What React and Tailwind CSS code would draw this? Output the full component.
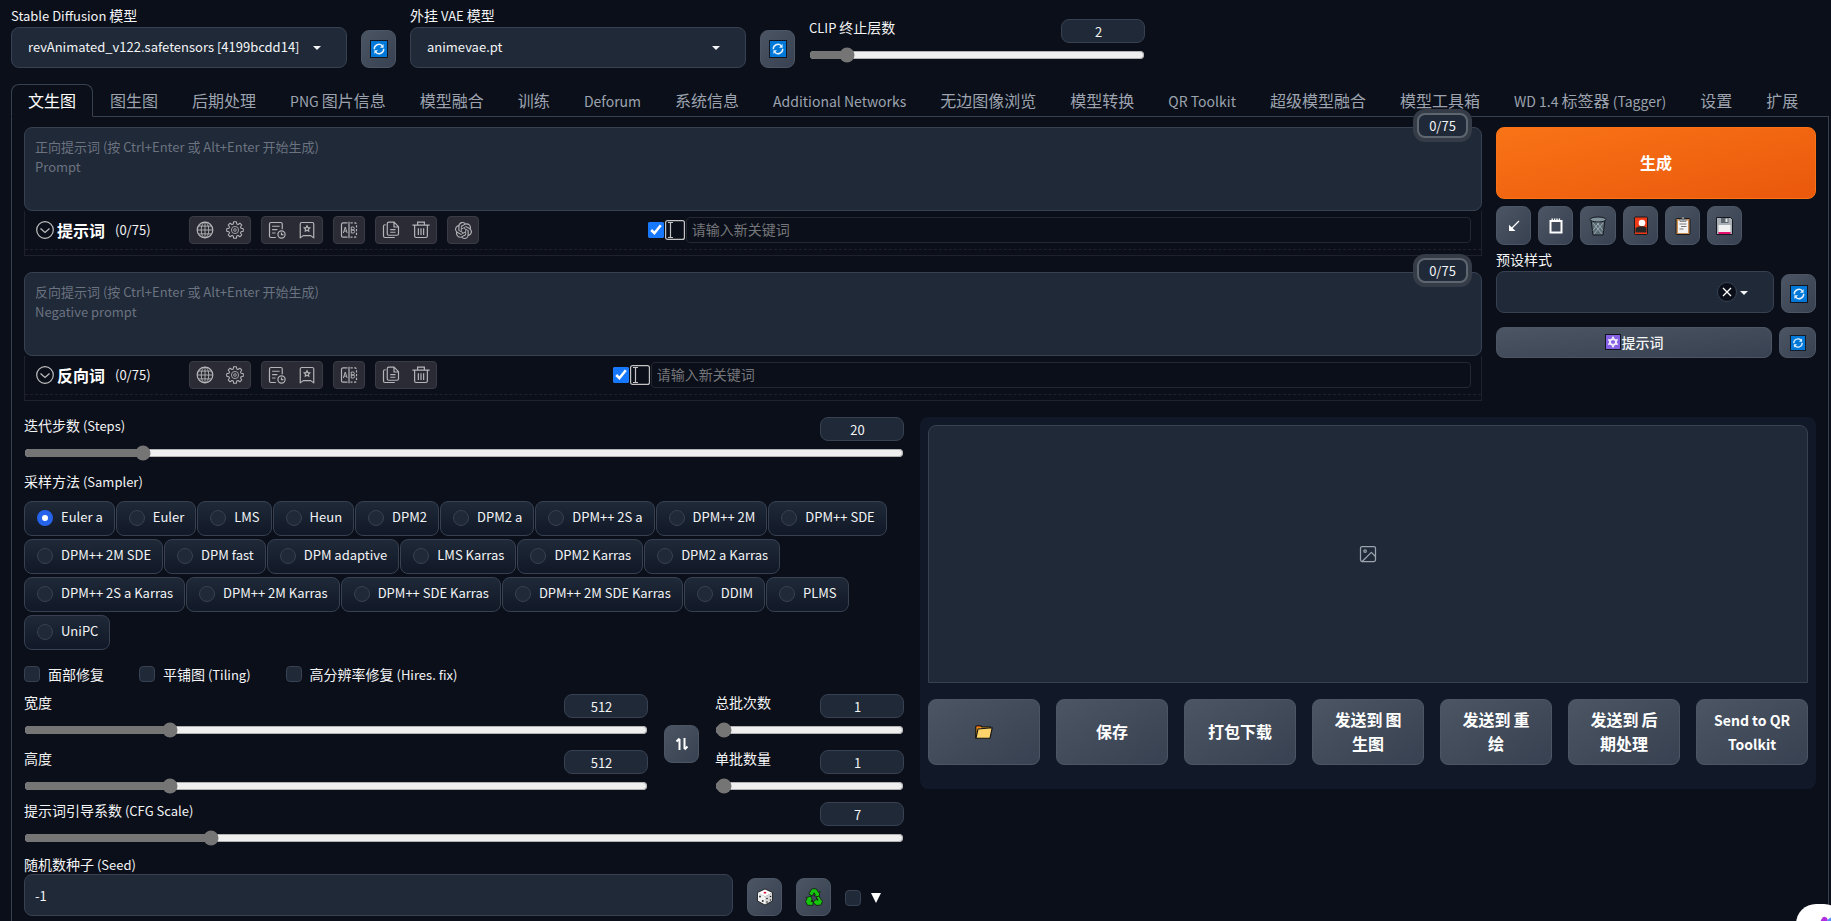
import React, { useState } from 'react'
import { SiOpenai } from 'react-icons/si'

const TABS = [
  '文生图', '图生图', '后期处理', 'PNG 图片信息', '模型融合', '训练', 'Deforum', '系统信息',
  'Additional Networks', '无边图像浏览', '模型转换', 'QR Toolkit', '超级模型融合', '模型工具箱',
  'WD 1.4 标签器 (Tagger)', '设置', '扩展'
]

const SAMPLERS = [
  'Euler a', 'Euler', 'LMS', 'Heun', 'DPM2', 'DPM2 a', 'DPM++ 2S a', 'DPM++ 2M', 'DPM++ SDE',
  'DPM++ 2M SDE', 'DPM fast', 'DPM adaptive', 'LMS Karras', 'DPM2 Karras', 'DPM2 a Karras',
  'DPM++ 2S a Karras', 'DPM++ 2M Karras', 'DPM++ SDE Karras', 'DPM++ 2M SDE Karras', 'DDIM', 'PLMS', 'UniPC'
]

const OUTPUT_ACTIONS = ['保存', '打包下载', '发送到 图生图', '发送到 重绘', '发送到 后期处理', 'Send to QR Toolkit']

// outline of a cog with eight teeth in a 24x24 box
const GEAR = Array.from({ length: 8 }, (_, k) =>
  [[-16, 8.4], [-9, 11.2], [9, 11.2], [16, 8.4]].map(([deg, r]) => {
    const a = ((k * 45 + deg) * Math.PI) / 180
    return `${(12 + r * Math.cos(a)).toFixed(2)} ${(12 + r * Math.sin(a)).toFixed(2)}`
  }).join('L')
).join('L')

/* ---------- text ---------- */

// Latin letters of the CJK face run large, so they are set one step smaller
function Mixed({ text, latin = 'text-[13px] leading-none' }) {
  return text.split(/([\x20-\x7e]+)/).filter(Boolean).map((part, i) =>
    /^[\x20-\x7e]/.test(part) ? <span key={i} className={latin}>{part}</span> : part
  )
}

/* ---------- icons ---------- */

function LineIcon({ children }) {
  return (
    <svg viewBox="0 0 24 24" className="w-[18px] h-[18px]" fill="none" stroke="currentColor" strokeWidth="1.6">
      {children}
    </svg>
  )
}

const GlobeIcon = () => (
  <LineIcon>
    <circle cx="12" cy="12" r="10.4" />
    <ellipse cx="12" cy="12" rx="5" ry="10.4" strokeWidth="1.2" />
    <path d="M12 1.6v20.8M1.6 12h20.8M3.2 6.8h17.6M3.2 17.2h17.6" strokeWidth="1.2" />
  </LineIcon>
)

const GearIcon = () => (
  <LineIcon>
    <path d={`M${GEAR}Z`} strokeWidth="1.4" strokeLinejoin="round" />
    <circle cx="12" cy="12" r="4.8" strokeWidth="1.1" />
    <circle cx="12" cy="12" r="1.8" strokeWidth="1.1" />
  </LineIcon>
)

const HistoryIcon = () => (
  <LineIcon>
    <path d="M10.5 22H4a2 2 0 0 1-2-2V4a2 2 0 0 1 2-2h13a2 2 0 0 1 2 2v7M5.5 7h10M5.5 11.5h7M5.5 16H10" />
    <circle cx="18" cy="18" r="4.8" />
    <path d="M18 15.2V18.2h2.6" />
  </LineIcon>
)

const FavoriteIcon = () => (
  <LineIcon>
    <path d="M3 22.500V4a2 2 0 0 1 2-2h14a2 2 0 0 1 2 2v18.500L17 19.500H7Z" strokeLinejoin="round" />
    <path d="m12 6.500 1.200 2.300 2.500.4-1.800 1.800.4 2.500-2.300-1.100-2.300 1.100.4-2.500-1.800-1.800 2.500-.4Z" />
  </LineIcon>
)

const TranslateIcon = () => (
  <LineIcon>
    <path d="M10 2.500H4a2 2 0 0 0-2 2v15a2 2 0 0 0 2 2h6M12 1v22" />
    <path d="M14 2.500h6a2 2 0 0 1 2 2v15a2 2 0 0 1-2 2h-6" strokeDasharray="3 2" />
    <path d="m4.500 16 2.500-8 2.500 8M5.500 13.500h3M15 8v8h2.500a2 2 0 0 0 0-4H15h2.200a2 2 0 0 0 0-4Z" strokeWidth="1.3" />
  </LineIcon>
)

const CopyIcon = () => (
  <LineIcon>
    <path d="M9 1.500h7l6 6V17a2 2 0 0 1-2 2H9a2 2 0 0 1-2-2V3.500a2 2 0 0 1 2-2ZM16 2v6h6M11 11.500h7M11 15h7" />
    <path d="M5 5H4a2 2 0 0 0-2 2v13a2 2 0 0 0 2 2h13" />
  </LineIcon>
)

const TrashIcon = () => (
  <LineIcon>
    <path d="M.5 5.500h23M7.500 5V1.500h9V5M3.500 5.500V20a2 2 0 0 0 2 2h13a2 2 0 0 0 2-2V5.500M8.500 9.500v9M12 9.500v9M15.500 9.500v9" />
  </LineIcon>
)

const OpenAiIcon = () => <SiOpenai className="w-[17px] h-[17px]" />

function RefreshIcon({ size = 'w-[18px] h-[18px]' }) {
  return (
    <svg viewBox="0 0 18 18" className={size}>
      <rect x=".5" y=".5" width="17" height="17" fill="#0078d7" stroke="#10151f" />
      <g fill="none" stroke="#e6f3ff" strokeWidth="1.4">
        <path d="M4.300 9.300A4.700 4.700 0 0 1 12.300 5.700" />
        <path d="M13.700 8.700A4.700 4.700 0 0 1 5.700 12.300" />
      </g>
      <path d="M13.600 4v3.700H10ZM4.400 14v-3.700H8Z" fill="#e6f3ff" />
    </svg>
  )
}

const Caret = () => (
  <svg viewBox="0 0 8 4" className="w-2 h-1" fill="#f3f4f6"><path d="M0 0h8L4 4Z" /></svg>
)

const ArrowIcon = () => (
  <svg viewBox="0 0 12 12" className="w-3 h-3" fill="none" stroke="#fff" strokeWidth="1.3">
    <path d="M11 1 3.500 8.500" />
    <path d="M1 4.800V11h6.500L4.200 7.800Z" fill="#fff" stroke="none" />
  </svg>
)

const BoardIcon = () => (
  <svg viewBox="0 0 14 16" className="w-3.5 h-4" fill="none" stroke="#fff">
    <rect x="1.500" y="3" width="11" height="11.500" strokeWidth="2" />
    <path d="M2.500 1.200h9" strokeWidth="1.6" strokeDasharray="1.4 1" />
  </svg>
)

const BinIcon = () => (
  <svg viewBox="0 0 18 20" className="w-[18px] h-5">
    <path d="M2 4h14l-2 15H4Z" fill="#5b6b73" stroke="#15191f" />
    <ellipse cx="9" cy="3.5" rx="8" ry="2.5" fill="#7f929c" stroke="#15191f" />
    <path d="M4 7l9 11M8 6.500l6 8M14 7 5 18M10 6.500l-6 8" stroke="#a9b8c0" strokeWidth=".8" />
  </svg>
)

const CardIcon = () => (
  <svg viewBox="0 0 14 20" className="w-3.5 h-5">
    <rect x=".5" y="1" width="13" height="17.500" rx="1" fill="#f03a17" stroke="#15191f" />
    <circle cx="8" cy="7" r="3.3" fill="#fff" />
    <path d="M1.500 12c4-2.500 8-2 11-.5v5h-11Z" fill="#262626" />
  </svg>
)

const ClipboardIcon = () => (
  <svg viewBox="0 0 16 20" className="w-4 h-5">
    <rect x="1" y="2.5" width="14" height="16" rx="1" fill="#c98f55" stroke="#15191f" />
    <path d="M3 4.500h10V17H3Z" fill="#f4f4f4" />
    <path d="M5 3h6v2.500H5ZM7 1h2v3H7Z" fill="#b5bcc2" stroke="#444" strokeWidth=".5" />
    <path d="M4.500 8h7M6 10.500h5.500M4.500 13h4" stroke="#777" />
  </svg>
)

const FloppyIcon = () => (
  <svg viewBox="0 0 17 18" className="w-[17px] h-[18px]">
    <path d="M.5.5h14l2 2v15H.5Z" fill="#a9afb5" stroke="#15191f" />
    <path d="M5 1h7.500v5H5Z" fill="#5f656c" />
    <path d="M9.500 1.500h2v3.500h-2Z" fill="#e8ebed" />
    <path d="M2.500 8h12v7h-12Z" fill="#f1f1f1" />
    <path d="M2.500 15h12v2h-12Z" fill="#e3106d" />
  </svg>
)

const StarBadge = () => (
  <svg viewBox="0 0 16 16" className="w-4 h-4">
    <rect x=".5" y=".5" width="15" height="15" fill="#8661e6" stroke="#10151f" />
    <path d="m8 3 4.300 7.300H3.700ZM8 13l4.300-7.300H3.700Z" fill="none" stroke="#fff" strokeWidth="1.1" />
  </svg>
)

const FolderIcon = () => (
  <svg viewBox="0 0 18 14" className="w-[18px] h-3.5">
    <path d="M.8 13V1.500L2 .8h3.500L7 2h8.500v2" fill="#f7a41c" stroke="#111" strokeWidth="1.2" />
    <path d="M1.500 1.500h3.500l.8.800H1.500Z" fill="#e8371a" />
    <path d="M1 13.200 3 4l14.200-1.200L15 13.200Z" fill="#ffd36b" stroke="#111" strokeWidth="1.1" />
  </svg>
)

const DiceIcon = () => (
  <svg viewBox="0 0 18 18" className="w-[18px] h-[18px]" stroke="#111" strokeWidth=".8" strokeLinejoin="round">
    <path d="m9 1 7.500 3.500L9 8.500 1.500 4.500Z" fill="#fff" stroke="none" />
    <path d="M1.500 4.500 9 8.500V17l-7.500-4Z" fill="#f1f1f1" stroke="none" />
    <path d="M16.500 4.500 9 8.500V17l7.500-4Z" fill="#d9d9d9" stroke="none" />
    <path d="m9 1 7.500 3.500V13L9 17l-7.500-4V4.500Z" fill="none" />
    <ellipse cx="9" cy="4.7" rx="1.4" ry=".9" fill="#e1133a" stroke="none" />
    <g fill="#222" stroke="none">
      <circle cx="4" cy="8.5" r=".9" /><circle cx="6.8" cy="13" r=".9" />
      <circle cx="11" cy="10.5" r=".8" /><circle cx="14.5" cy="8.5" r=".8" />
      <circle cx="11" cy="14" r=".8" /><circle cx="14.5" cy="12" r=".8" />
    </g>
  </svg>
)

const RecycleIcon = () => (
  <svg viewBox="0 0 18 18" className="w-[18px] h-[18px]" fill="#16c60c" stroke="#0c0c0c" strokeWidth=".7" strokeLinejoin="round">
    <path d="M3.800 6 6.800.8h4.400l2.300 3.600 1.500-.8-.9 5.400-5.300-1.300 1.600-1L9 4.800 7.500 8Z" />
    <path d="m13.800 8 3.700 5.500-1.900 3.700h-3.700v.6L8.100 14.200l3.800-3.700v1.600h1.200l-2-3Z" />
    <path d="M8 17.300H2.500L.5 13.500l1.600-3-1.300-.9 5.400-1.400 1.400 5.100-1.300-.7-.4.700H8Z" />
  </svg>
)

const ImageIcon = () => (
  <svg viewBox="0 0 24 24" className="w-5 h-5 text-[#9ca3af]" fill="none" stroke="currentColor" strokeWidth="1.5" strokeLinecap="round" strokeLinejoin="round">
    <rect x="3" y="3" width="18" height="18" rx="2" />
    <circle cx="8.5" cy="8.5" r="1.5" />
    <path d="m21 15-5-5L5 21" />
  </svg>
)

/* ---------- controls ---------- */

function GreyButton({ label, className = '', children }) {
  return (
    <button
      type="button"
      aria-label={label}
      className={`flex items-center justify-center shrink-0 rounded-lg border border-[#4b5563] bg-linear-to-br from-[#4b5563] to-[#374151] ${className}`}
    >
      {children}
    </button>
  )
}

function ModelSelect({ id, label, value }) {
  return (
    <div className="w-[336px]">
      <label htmlFor={id} className="block pb-0.5 leading-[19px]"><Mixed text={label} /></label>
      <div className="relative">
        <select id={id} className="appearance-none w-full h-[41px] rounded-lg border border-[#374151] bg-[#1f2937] px-4 text-[13px]">
          <option>{value}</option>
        </select>
        <span className="absolute right-6.5 top-[19px] pointer-events-none"><Caret /></span>
      </div>
    </div>
  )
}

function SliderField({ id, label, min, max, initial, className = '' }) {
  const [value, setValue] = useState(initial)
  const onChange = e => setValue(e.target.value)

  return (
    <div className={className}>
      <div className="flex items-start justify-between">
        <label htmlFor={id} className="leading-4"><Mixed text={label} /></label>
        <input
          type="number"
          aria-label={label}
          value={value}
          onChange={onChange}
          className="w-[84px] h-6 rounded-lg border border-[#374151] bg-[#1f2937] pl-1.5 text-center text-[13px]"
        />
      </div>
      <input
        id={id}
        type="range"
        min={min}
        max={max}
        value={value}
        onChange={onChange}
        className="block w-full h-4 mt-1 px-px accent-[#757575]"
      />
    </div>
  )
}

function DarkCheckbox({ id, label }) {
  return (
    <div className="flex items-center gap-2">
      <input id={id} type="checkbox" className="appearance-none w-4 h-4 rounded-sm border border-[#374151] bg-[#1f2937] checked:bg-[#2563eb]" />
      <label htmlFor={id} className="leading-4"><Mixed text={label} /></label>
    </div>
  )
}

function IconGroup({ items }) {
  return (
    <div className="flex h-7 rounded-sm border border-[#3a3b44] bg-[#2a2b34] text-[#b4b5b8]">
      {items.map(([label, Icon]) => (
        <button key={label} type="button" aria-label={label} className="flex items-center justify-center w-[30px]">
          <Icon />
        </button>
      ))}
    </div>
  )
}

function PromptBox({ id, placeholder, title, withGpt }) {
  const groups = [
    [['语言', GlobeIcon], ['设置', GearIcon]],
    [['历史记录', HistoryIcon], ['收藏', FavoriteIcon]],
    [['翻译', TranslateIcon]],
    [['复制', CopyIcon], ['清空', TrashIcon]]
  ]
  if (withGpt) groups.push([['ChatGPT', OpenAiIcon]])

  return (
    <div className="relative">
      <textarea
        id={id}
        aria-label={title}
        placeholder={placeholder}
        className="block w-full h-[84px] resize-none rounded-lg border border-[#374151] bg-[#1f2937] px-2.5 py-[9px] text-[13px] leading-5 placeholder:text-[#6b7280]"
      />
      <span className="absolute right-3.5 -top-3.5 rounded-lg border-2 border-[#5e6670] bg-[#1f2937] w-[51px] text-center text-[13px] leading-[21px] ring-4 ring-[#353c47]">
        0/75
      </span>

      <div className="border-x border-b border-[#1f222c] pt-[5px] pb-[5px]">
        <div className="flex items-center gap-2.5 pl-[11px] pr-2.5 pb-[5px] border-b border-dashed border-[#1f222c]">
          <div className="flex items-center w-[143px]">
            <button type="button" aria-label="折叠" className="text-[#c0c0c0]">
              <svg viewBox="0 0 18 18" className="w-[18px] h-[18px]" fill="none" stroke="currentColor" strokeWidth="1.2">
                <circle cx="9" cy="9" r="8.3" />
                <path d="m4.500 7.500 4.500 4 4.500-4" />
              </svg>
            </button>
            <span className="ml-[3px] text-base font-bold text-white leading-6">{title}</span>
            <span className="ml-2.5 text-[13px]">(0/75)</span>
          </div>
          {groups.map((items, i) => <IconGroup key={i} items={items} />)}

          {/* spacer and keyword input share the rest of the row */}
          <div className="flex grow -mx-2.5 pr-2.5">
            <div className="flex-17" />
            <div className="flex-83 flex items-center min-w-0">
              <input id={`${id}-auto`} type="checkbox" defaultChecked aria-label="自动输入" className="w-4 h-4 mr-px shrink-0 accent-[#1677ff]" />
              <svg viewBox="0 0 20 20" className="w-5 h-5 mr-px shrink-0" fill="none" stroke="#c4c4c4" strokeWidth="1.2">
                <rect x=".6" y=".6" width="18.800" height="18.800" rx="2" />
                <path d="M3 2.500h5M3 17.500h5M5.500 2.500v15" />
              </svg>
              <input
                aria-label="新关键词"
                placeholder="请输入新关键词"
                className="w-full h-[26px] min-w-0 rounded-sm border border-[#25282f] px-[5px] pb-0.5 placeholder:text-[#75767a]"
              />
            </div>
          </div>
        </div>
      </div>
    </div>
  )
}

function GeneratePanel() {
  return (
    <div className="w-[320px] flex flex-col">
      <button type="button" className="h-[72px] pb-0.5 rounded-lg border border-[#f97316] bg-linear-to-br from-[#f97316] to-[#ea580c] text-base font-semibold text-white">
        生成
      </button>

      <div className="flex gap-[7px] mt-[7px]">
        <GreyButton label="读取上次参数" className="w-[35px] h-[39px]"><ArrowIcon /></GreyButton>
        <GreyButton label="读取剪贴板" className="w-[35px] h-[39px]"><BoardIcon /></GreyButton>
        <GreyButton label="清空提示词" className="w-9 h-[39px]"><BinIcon /></GreyButton>
        <GreyButton label="附加网络" className="w-[35px] h-[39px]"><CardIcon /></GreyButton>
        <GreyButton label="应用样式" className="w-[35px] h-[39px]"><ClipboardIcon /></GreyButton>
        <GreyButton label="保存样式" className="w-[35px] h-[39px]"><FloppyIcon /></GreyButton>
      </div>

      <label htmlFor="styles" className="mt-1.5 mb-1 leading-4">预设样式</label>
      <div className="flex items-end gap-[7px]">
        <div className="relative grow">
          <select id="styles" className="block appearance-none w-full h-[42px] rounded-lg border border-[#374151] bg-[#1f2937] px-4">
            <option value=""></option>
          </select>
          <button type="button" aria-label="清除" className="absolute right-[37px] top-[11px] flex items-center justify-center w-5 h-5 rounded-full border border-[#374151] bg-[#0b0f19]">
            <svg viewBox="0 0 10 10" className="w-2.5 h-2.5" stroke="#fff" strokeWidth="1.3"><path d="m1 1 8 8M9 1 1 9" /></svg>
          </button>
          <span className="absolute right-6.5 top-5 pointer-events-none"><Caret /></span>
        </div>
        <GreyButton label="刷新样式" className="w-[35px] h-[39px]"><RefreshIcon /></GreyButton>
      </div>

      <div className="flex gap-[7px] mt-3.5">
        <GreyButton className="grow h-[31px] pb-0.5 gap-px font-medium leading-5"><StarBadge />提示词</GreyButton>
        <GreyButton label="刷新提示词" className="w-[37px] h-[31px]"><RefreshIcon size="w-4 h-4" /></GreyButton>
      </div>
    </div>
  )
}

function Settings() {
  const [sampler, setSampler] = useState('Euler a')

  return (
    <div className="flex-1 min-w-0">
      <SliderField id="steps" label="迭代步数 (Steps)" min={1} max={150} initial={20} />

      <fieldset className="mt-2.5">
        <legend className="leading-5"><Mixed text="采样方法 (Sampler)" /></legend>
        <div className="flex flex-wrap gap-x-px gap-y-[3px] mt-2.5">
          {SAMPLERS.map(name => (
            <label key={name} className="flex items-center gap-2 h-[35px] pl-3 pr-[11px] pb-0.5 rounded-lg border border-[#374151] bg-linear-to-b from-[#1f2937] to-[#111827] text-[13px]">
              <input
                type="radio"
                name="sampler"
                checked={sampler === name}
                onChange={() => setSampler(name)}
                className="appearance-none w-4 h-4 rounded-full border border-[#374151] bg-[#1f2937] checked:border-[5px] checked:border-[#2563eb] checked:bg-white"
              />
              {name}
            </label>
          ))}
        </div>
      </fieldset>

      <div className="flex gap-[35px] mt-4">
        <DarkCheckbox id="faces" label="面部修复" />
        <DarkCheckbox id="tiling" label="平铺图 (Tiling)" />
        <DarkCheckbox id="hires" label="高分辨率修复 (Hires. fix)" />
      </div>

      <div className="flex items-center gap-4 mt-3">
        <div className="grow space-y-3">
          <SliderField id="width" label="宽度" min={64} max={2048} initial={512} />
          <SliderField id="height" label="高度" min={64} max={2048} initial={512} />
        </div>
        <GreyButton label="交换宽高" className="w-[35px] h-[38px]">
          <svg viewBox="0 0 14 14" className="w-3.5 h-3.5" fill="none" stroke="#fff" strokeWidth="2">
            <path d="M4.500 13V2M9.500 1v11M1.500 4.500l3-3M12.500 9.500l-3 3" />
          </svg>
        </GreyButton>
        <div className="w-[189px] space-y-3">
          <SliderField id="batch-count" label="总批次数" min={1} max={100} initial={1} />
          <SliderField id="batch-size" label="单批数量" min={1} max={8} initial={1} />
        </div>
      </div>

      <SliderField id="cfg" label="提示词引导系数 (CFG Scale)" min={1} max={30} initial={7} className="mt-2" />

      <label htmlFor="seed" className="block mt-2 leading-5"><Mixed text="随机数种子 (Seed)" /></label>
      <div className="flex items-end gap-3.5">
        <input id="seed" type="number" defaultValue="-1" className="grow h-[42px] rounded-lg border border-[#374151] bg-[#1f2937] px-2.5 text-[13px]" />
        <GreyButton label="随机种子" className="w-[35px] h-[38px]"><DiceIcon /></GreyButton>
        <GreyButton label="重用种子" className="w-[35px] h-[38px]"><RecycleIcon /></GreyButton>
        <div className="flex items-center gap-2.5 w-[59px] h-9">
          <input type="checkbox" id="seed-extra" aria-label="更多种子选项" className="appearance-none w-4 h-4 rounded-sm border border-[#374151] bg-[#1f2937] checked:bg-[#2563eb]" />
          <label htmlFor="seed-extra">
            <svg viewBox="0 0 10 10" className="w-2.5 h-2.5" fill="#fff"><path d="M0 0h10L5 10Z" /></svg>
          </label>
        </div>
      </div>
    </div>
  )
}

function OutputPanel() {
  return (
    <div className="flex-1 min-w-0 self-start rounded-lg bg-[#111827] px-2 pt-2 pb-6">
      <div className="flex items-center justify-center h-[258px] rounded-t-lg border border-[#374151] bg-[#1f2937]">
        <ImageIcon />
      </div>
      <div className="grid grid-cols-7 gap-4 mt-4">
        <GreyButton label="打开输出目录" className="h-[66px]"><FolderIcon /></GreyButton>
        {OUTPUT_ACTIONS.map(text => (
          <GreyButton key={text} className="h-[66px] px-4 pb-0.5 text-base font-semibold leading-6 text-white">
            <span><Mixed text={text} latin="text-sm leading-none" /></span>
          </GreyButton>
        ))}
      </div>
    </div>
  )
}

export default function App() {
  const [tab, setTab] = useState('文生图')

  return (
    <div className="flex flex-col min-h-screen overflow-hidden bg-[#0b0f19] pl-[11px] pr-0.5 pt-1.5 text-sm text-[#f3f4f6] font-['Noto_Sans_CJK_SC',sans-serif]">
      <div className="flex items-end gap-3.5">
        <ModelSelect id="checkpoint" label="Stable Diffusion 模型" value="revAnimated_v122.safetensors [4199bcdd14]" />
        <GreyButton label="刷新模型" className="w-[35px] h-[38px]"><RefreshIcon /></GreyButton>
        <ModelSelect id="vae" label="外挂 VAE 模型" value="animevae.pt" />
        <GreyButton label="刷新 VAE" className="w-[35px] h-[38px]"><RefreshIcon /></GreyButton>
        <SliderField id="clip" label="CLIP 终止层数" min={1} max={12} initial={2} className="w-[336px] pb-[5px]" />
      </div>

      <nav className="flex mt-4 border-b border-[#374151]">
        {TABS.map(name => (
          <button
            key={name}
            type="button"
            onClick={() => setTab(name)}
            className={`-mb-px h-[33px] px-4 pb-0.5 rounded-t-lg border text-base leading-6 whitespace-nowrap ${
              tab === name
                ? 'border-[#374151] border-b-[#0b0f19] bg-[#0b0f19] text-white'
                : 'border-transparent text-[#9ca3af]'
            }`}
          >
            <Mixed text={name} latin="text-sm leading-none" />
          </button>
        ))}
      </nav>

      <main className="grow border-x border-[#374151] px-3 pt-2.5 pb-1">
        <div className="flex gap-3.5">
          <div className="grow space-y-4">
            <PromptBox
              id="prompt"
              title="提示词"
              placeholder={'正向提示词 (按 Ctrl+Enter 或 Alt+Enter 开始生成)\nPrompt'}
              withGpt
            />
            <PromptBox
              id="negative"
              title="反向词"
              placeholder={'反向提示词 (按 Ctrl+Enter 或 Alt+Enter 开始生成)\nNegative prompt'}
            />
          </div>
          <GeneratePanel />
        </div>

        <div className="flex gap-4 mt-4">
          <Settings />
          <OutputPanel />
        </div>
      </main>

      {/* assistant bubble, mostly outside the corner */}
      <a href="#assistant" aria-label="助手" className="fixed -right-[13px] -bottom-[31px] flex items-center justify-center w-12 h-12 rounded-[20px] bg-white">
        <svg viewBox="0 0 24 24" className="w-6 h-6 ml-4" fill="none" strokeWidth="3.5" strokeLinecap="round">
          <path d="M3 14 7 4c1-2 3-2 3 1v9" stroke="#b02fe0" />
          <path d="M12 8c1-5 5-6 7-3l3 8" stroke="#5a8cf5" />
        </svg>
      </a>
    </div>
  )
}
